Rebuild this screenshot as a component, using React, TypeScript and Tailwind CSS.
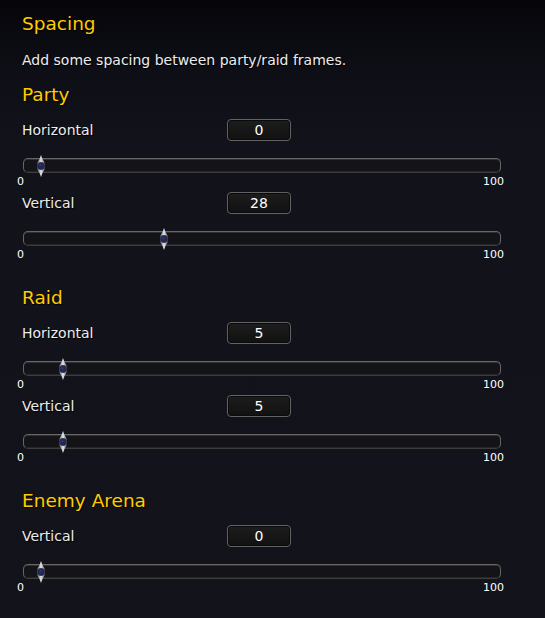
import React from "react";

const Heading = ({ children, className = "" }: { children: React.ReactNode; className?: string }) => (
  <div className={`h-[24px] leading-[24px] text-[18.5px] text-[#ffcc00] [text-shadow:1px_1px_1px_#000] ${className}`}>{children}</div>
);

const Thumb = () => (
  <svg width="10" height="22" viewBox="0 0 10 22">
    <defs>
      <linearGradient id="sv" x1="0" x2="1" y1="0" y2="0">
        <stop offset="0" stopColor="#7a7a84" />
        <stop offset="0.5" stopColor="#e4e4ec" />
        <stop offset="1" stopColor="#7a7a84" />
      </linearGradient>
    </defs>
    <path d="M5 0 L6.5 4 L8.5 7.5 L8.5 14.5 L6.5 18 L5 22 L3.5 18 L1.5 14.5 L1.5 7.5 L3.5 4 Z" fill="url(#sv)" />
    <circle cx="5" cy="11" r="4" fill="#3a3a46" />
    <circle cx="5" cy="11" r="3.1" fill="#1f2858" />
    <circle cx="4.3" cy="10.2" r="1" fill="#3b4a8c" opacity="0.7" />
  </svg>
);

const SliderBlock = ({ label, value }: { label: string; value: number }) => (
  <div className="flex flex-col">
    <div className="flex items-center h-[22px]">
      <div className="w-[205px] text-[14px] text-[#ececec] leading-[20px] [text-shadow:1px_1px_1px_#000]">{label}</div>
      <div className="w-[64px] h-[22px] rounded-[4px] border border-[#626262] bg-[linear-gradient(to_bottom,#1d1d1d,#111111)] flex items-center justify-center text-[14px] text-white leading-none shadow-[inset_0_0_0_1px_#0a0a0a]">
        {value}
      </div>
    </div>
    <div className="relative mt-[17px] w-[478px] ml-[1px] h-[15px] rounded-[5px] border border-[#666666] border-b-[#3c3c3c] bg-[#141418] shadow-[inset_0_1px_0_#303034,inset_0_-1px_0_#26262a]">
      <div className="absolute top-[-4px]" style={{ left: `${12 + value * 4.39}px` }}>
        <Thumb />
      </div>
    </div>
    <div className="mt-[3px] h-[12px] w-[487px] -ml-[5px] flex justify-between text-[11px] leading-[12px] text-white">
      <span>0</span>
      <span>100</span>
    </div>
  </div>
);

export default function App() {
  return (
    <div className="w-[545px] h-[618px] overflow-hidden bg-[linear-gradient(to_bottom,#05050a_0px,#0e0e16_70px,#12121b_140px,#13131c_100%)] pl-[22px] pt-[12px] font-['DejaVu_Sans',sans-serif]">
      <Heading>Spacing</Heading>
      <div className="mt-[14px] h-[20px] text-[14px] leading-[20px] text-[#ececec] [text-shadow:1px_1px_1px_#000]">
        Add some spacing between party/raid frames.
      </div>
      <Heading className="mt-[13px]">Party</Heading>
      <div className="mt-[12px] flex flex-col gap-[4px]">
        <SliderBlock label="Horizontal" value={0} />
        <SliderBlock label="Vertical" value={28} />
      </div>
      <Heading className="mt-[25px]">Raid</Heading>
      <div className="mt-[12px] flex flex-col gap-[4px]">
        <SliderBlock label="Horizontal" value={5} />
        <SliderBlock label="Vertical" value={5} />
      </div>
      <Heading className="mt-[25px]">Enemy Arena</Heading>
      <div className="mt-[12px] flex flex-col gap-[4px]">
        <SliderBlock label="Vertical" value={0} />
      </div>
    </div>
  );
}
